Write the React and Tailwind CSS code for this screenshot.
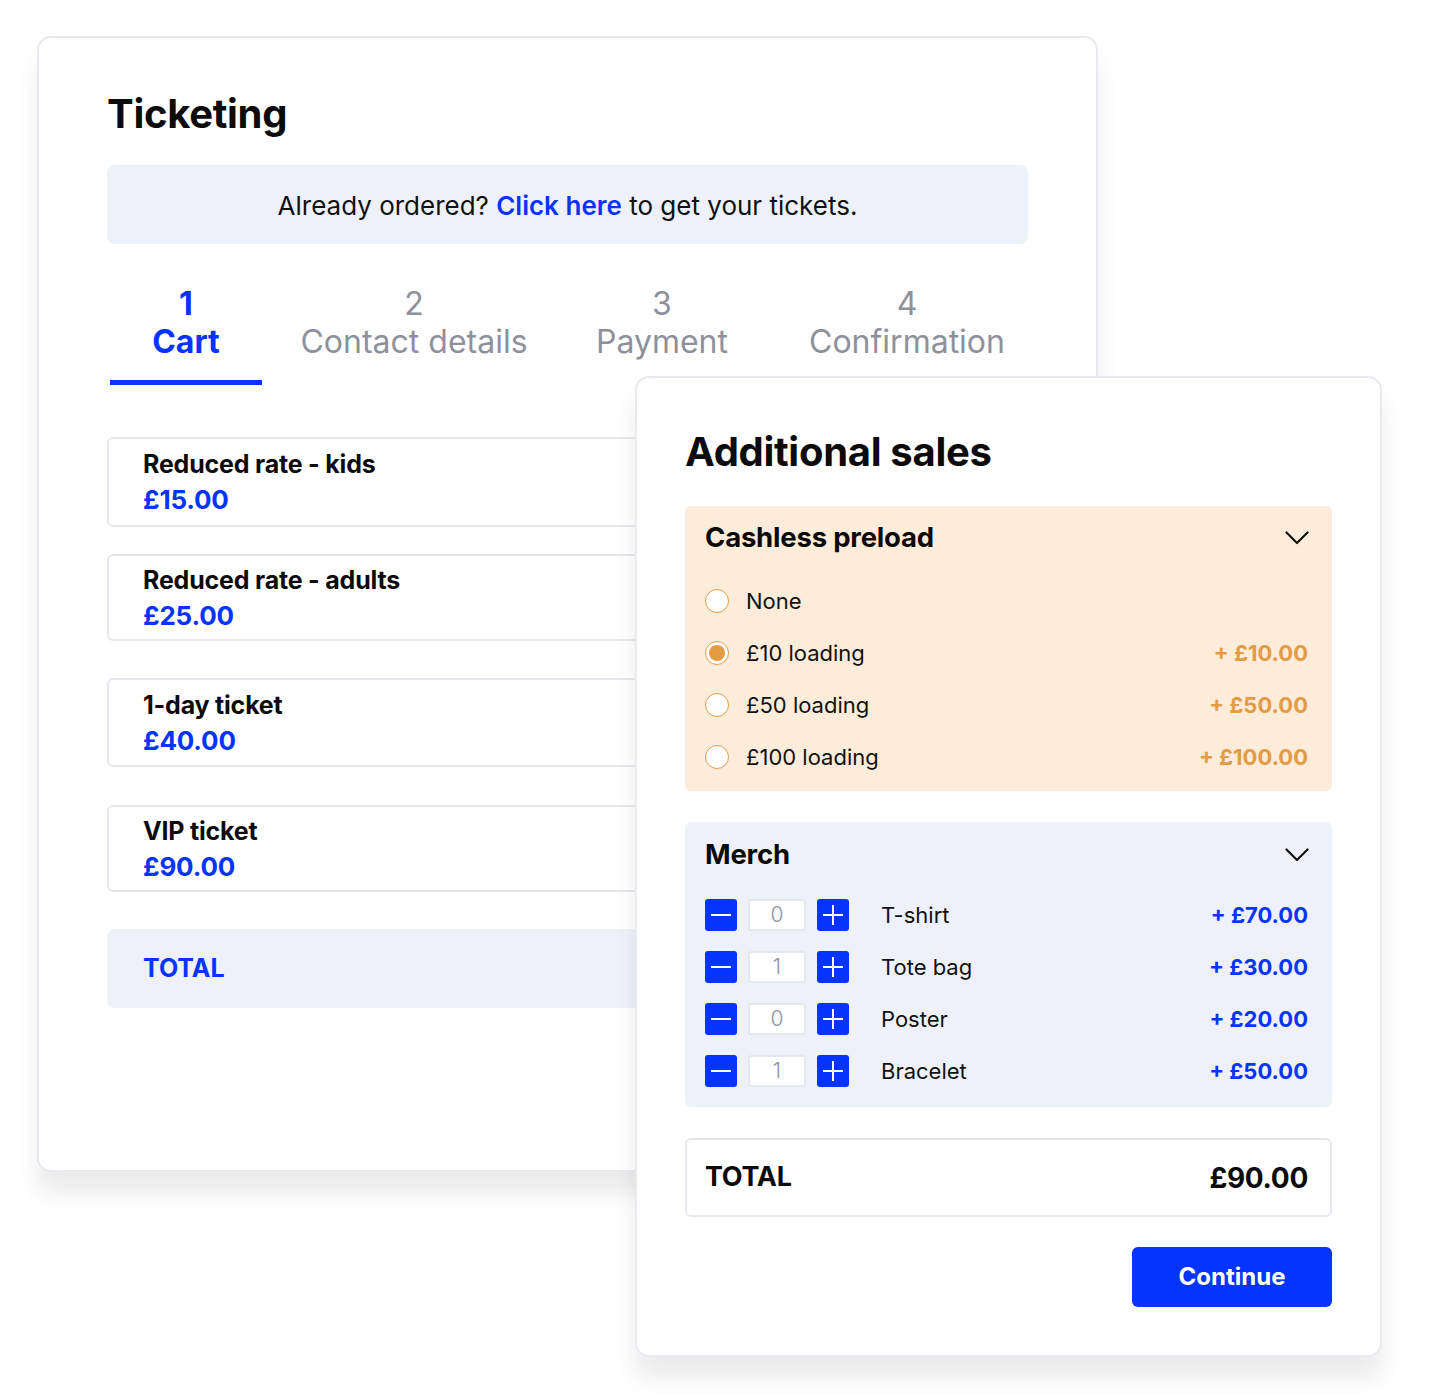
import React from "react";

const BLUE = "text-[#0533ff]";

function Chevron() {
  return (
    <svg width="24" height="14" viewBox="0 0 24 14" fill="none">
      <path d="M1.5 1.5 L12 12 L22.5 1.5" stroke="#111" strokeWidth="2.2" strokeLinecap="round" strokeLinejoin="round" />
    </svg>
  );
}

function TicketRow({ title, price, h, mt }) {
  return (
    <div className={`${h} ${mt} flex flex-col justify-center rounded-[6px] border-2 border-[#e6e8ef] pl-[34px]`}>
      <div className="text-[25px] leading-[36px] font-bold text-[#0b0b0b] tracking-[-0.2px]">{title}</div>
      <div className={`text-[26px] leading-[36px] font-bold ${BLUE} tracking-[-0.2px]`}>{price}</div>
    </div>
  );
}

function Radio({ label, price, selected }) {
  return (
    <div className="flex h-[52px] items-center">
      <div className="flex h-[24px] w-[24px] items-center justify-center rounded-full border border-[#e39b44] bg-white">
        {selected && <div className="h-[16px] w-[16px] rounded-full bg-[#e39b44]" />}
      </div>
      <div className="ml-[17px] text-[22px] text-[#111]">{label}</div>
      <div className="ml-auto text-[22px] font-bold text-[#e39b44]">{price}</div>
    </div>
  );
}

function Stepper({ value, label, price }) {
  return (
    <div className="flex h-[32px] items-center">
      <div className="flex h-[32px] w-[32px] items-center justify-center rounded-[3px] bg-[#0533ff]">
        <div className="h-[2px] w-[20px] bg-white" />
      </div>
      <div className="ml-[11px] flex h-[32px] w-[58px] items-center justify-center rounded-[3px] border-2 border-[#e6e8ef] bg-white text-[21px] font-light text-[#8f93a0]">
        {value}
      </div>
      <div className="relative ml-[11px] flex h-[32px] w-[32px] items-center justify-center rounded-[3px] bg-[#0533ff]">
        <div className="h-[2px] w-[20px] bg-white" />
        <div className="absolute h-[20px] w-[2px] bg-white" />
      </div>
      <div className="ml-[32px] text-[22px] text-[#111]">{label}</div>
      <div className={`ml-auto text-[22px] font-bold ${BLUE}`}>{price}</div>
    </div>
  );
}

export default function App() {
  return (
    <div className="relative h-[1395px] w-[1429px] overflow-hidden bg-white" style={{ fontFamily: "Inter, 'Noto Sans', sans-serif" }}>
      {/* Ticketing card */}
      <div className="ml-[37px] mt-[36px] h-[1136px] w-[1061px] rounded-[14px] border-2 border-[#e8eaf0] bg-white px-[68px] pt-[52px] shadow-[0_22px_22px_rgba(0,0,0,0.08)]">
        <h1 className="text-[40px] leading-[48px] font-bold tracking-[-0.3px] text-[#0b0b0b]">Ticketing</h1>
        <div className="mt-[27px] flex h-[79px] w-[921px] items-center justify-center rounded-[8px] bg-[#eef1fa] pt-[2px] text-[26px] text-[#111]">
          <span>
            Already ordered? <span className={`font-semibold ${BLUE}`}>Click here</span> to get your tickets.
          </span>
        </div>
        <div className="ml-[3px] mt-[41px] flex text-[32px] leading-[38px]">
          <div className="w-[152px] shrink-0 text-center">
            <div className={`font-bold ${BLUE}`}>1</div>
            <div className={`font-bold ${BLUE}`}>Cart</div>
            <div className="mt-[19px] h-[5px] w-[152px] bg-[#0533ff]" />
          </div>
          <div className="w-[304px] shrink-0 text-center text-[#8e919c]">
            <div>2</div>
            <div>Contact details</div>
          </div>
          <div className="w-[192px] shrink-0 text-center text-[#8e919c]">
            <div>3</div>
            <div>Payment</div>
          </div>
          <div className="w-[298px] shrink-0 text-center text-[#8e919c]">
            <div>4</div>
            <div>Confirmation</div>
          </div>
        </div>
        <div className="w-[921px]">
          <TicketRow title="Reduced rate - kids" price="£15.00" h="h-[90px]" mt="mt-[52px]" />
          <TicketRow title="Reduced rate - adults" price="£25.00" h="h-[87px]" mt="mt-[27px]" />
          <TicketRow title="1-day ticket" price="£40.00" h="h-[89px]" mt="mt-[37px]" />
          <TicketRow title="VIP ticket" price="£90.00" h="h-[87px]" mt="mt-[38px]" />
          <div className="mt-[37px] flex h-[79px] items-center rounded-[8px] bg-[#eef1fa] pl-[36px]">
            <span className={`text-[25px] font-bold ${BLUE}`}>TOTAL</span>
          </div>
        </div>
      </div>

      {/* Additional sales card (overlapping window) */}
      <div className="absolute left-[635px] top-[376px] h-[981px] w-[747px] rounded-[14px] border-2 border-[#e8eaf0] bg-white px-[48px] pt-[50px] shadow-[0_22px_22px_rgba(0,0,0,0.08)]">
        <h2 className="text-[40px] leading-[48px] font-bold tracking-[-0.3px] text-[#0b0b0b]">Additional sales</h2>
        <div className="mt-[30px] h-[285px] rounded-[6px] bg-[#fdecd9] px-[20px] pt-[14px]">
          <div className="flex h-[36px] items-center justify-between">
            <span className="text-[27.5px] font-bold tracking-[-0.2px] text-[#0b0b0b]">Cashless preload</span>
            <span className="mr-[3px]"><Chevron /></span>
          </div>
          <div className="mt-[19px] pr-[4px]">
            <Radio label="None" price="" />
            <Radio label="£10 loading" price="+ £10.00" selected />
            <Radio label="£50 loading" price="+ £50.00" />
            <Radio label="£100 loading" price="+ £100.00" />
          </div>
        </div>
        <div className="mt-[31px] h-[285px] rounded-[6px] bg-[#eef1fa] px-[20px] pt-[15px]">
          <div className="flex h-[36px] items-center justify-between">
            <span className="text-[27.5px] font-bold tracking-[-0.2px] text-[#0b0b0b]">Merch</span>
            <span className="mr-[3px]"><Chevron /></span>
          </div>
          <div className="mt-[26px] flex flex-col gap-[20px] pr-[4px]">
            <Stepper value="0" label="T-shirt" price="+ £70.00" />
            <Stepper value="1" label="Tote bag" price="+ £30.00" />
            <Stepper value="0" label="Poster" price="+ £20.00" />
            <Stepper value="1" label="Bracelet" price="+ £50.00" />
          </div>
        </div>
        <div className="mt-[31px] flex h-[79px] items-center justify-between rounded-[6px] border-2 border-[#e6e8ef] px-[18px]">
          <span className="text-[27px] font-bold tracking-[-0.3px] text-[#0b0b0b]">TOTAL</span>
          <span className="mr-[4px] text-[28px] font-bold tracking-[-0.3px] text-[#0b0b0b]">£90.00</span>
        </div>
        <div className="mt-[30px] flex justify-end">
          <button className="h-[60px] w-[200px] rounded-[6px] bg-[#0533ff] text-[24px] font-bold text-white">Continue</button>
        </div>
      </div>
    </div>
  );
}
